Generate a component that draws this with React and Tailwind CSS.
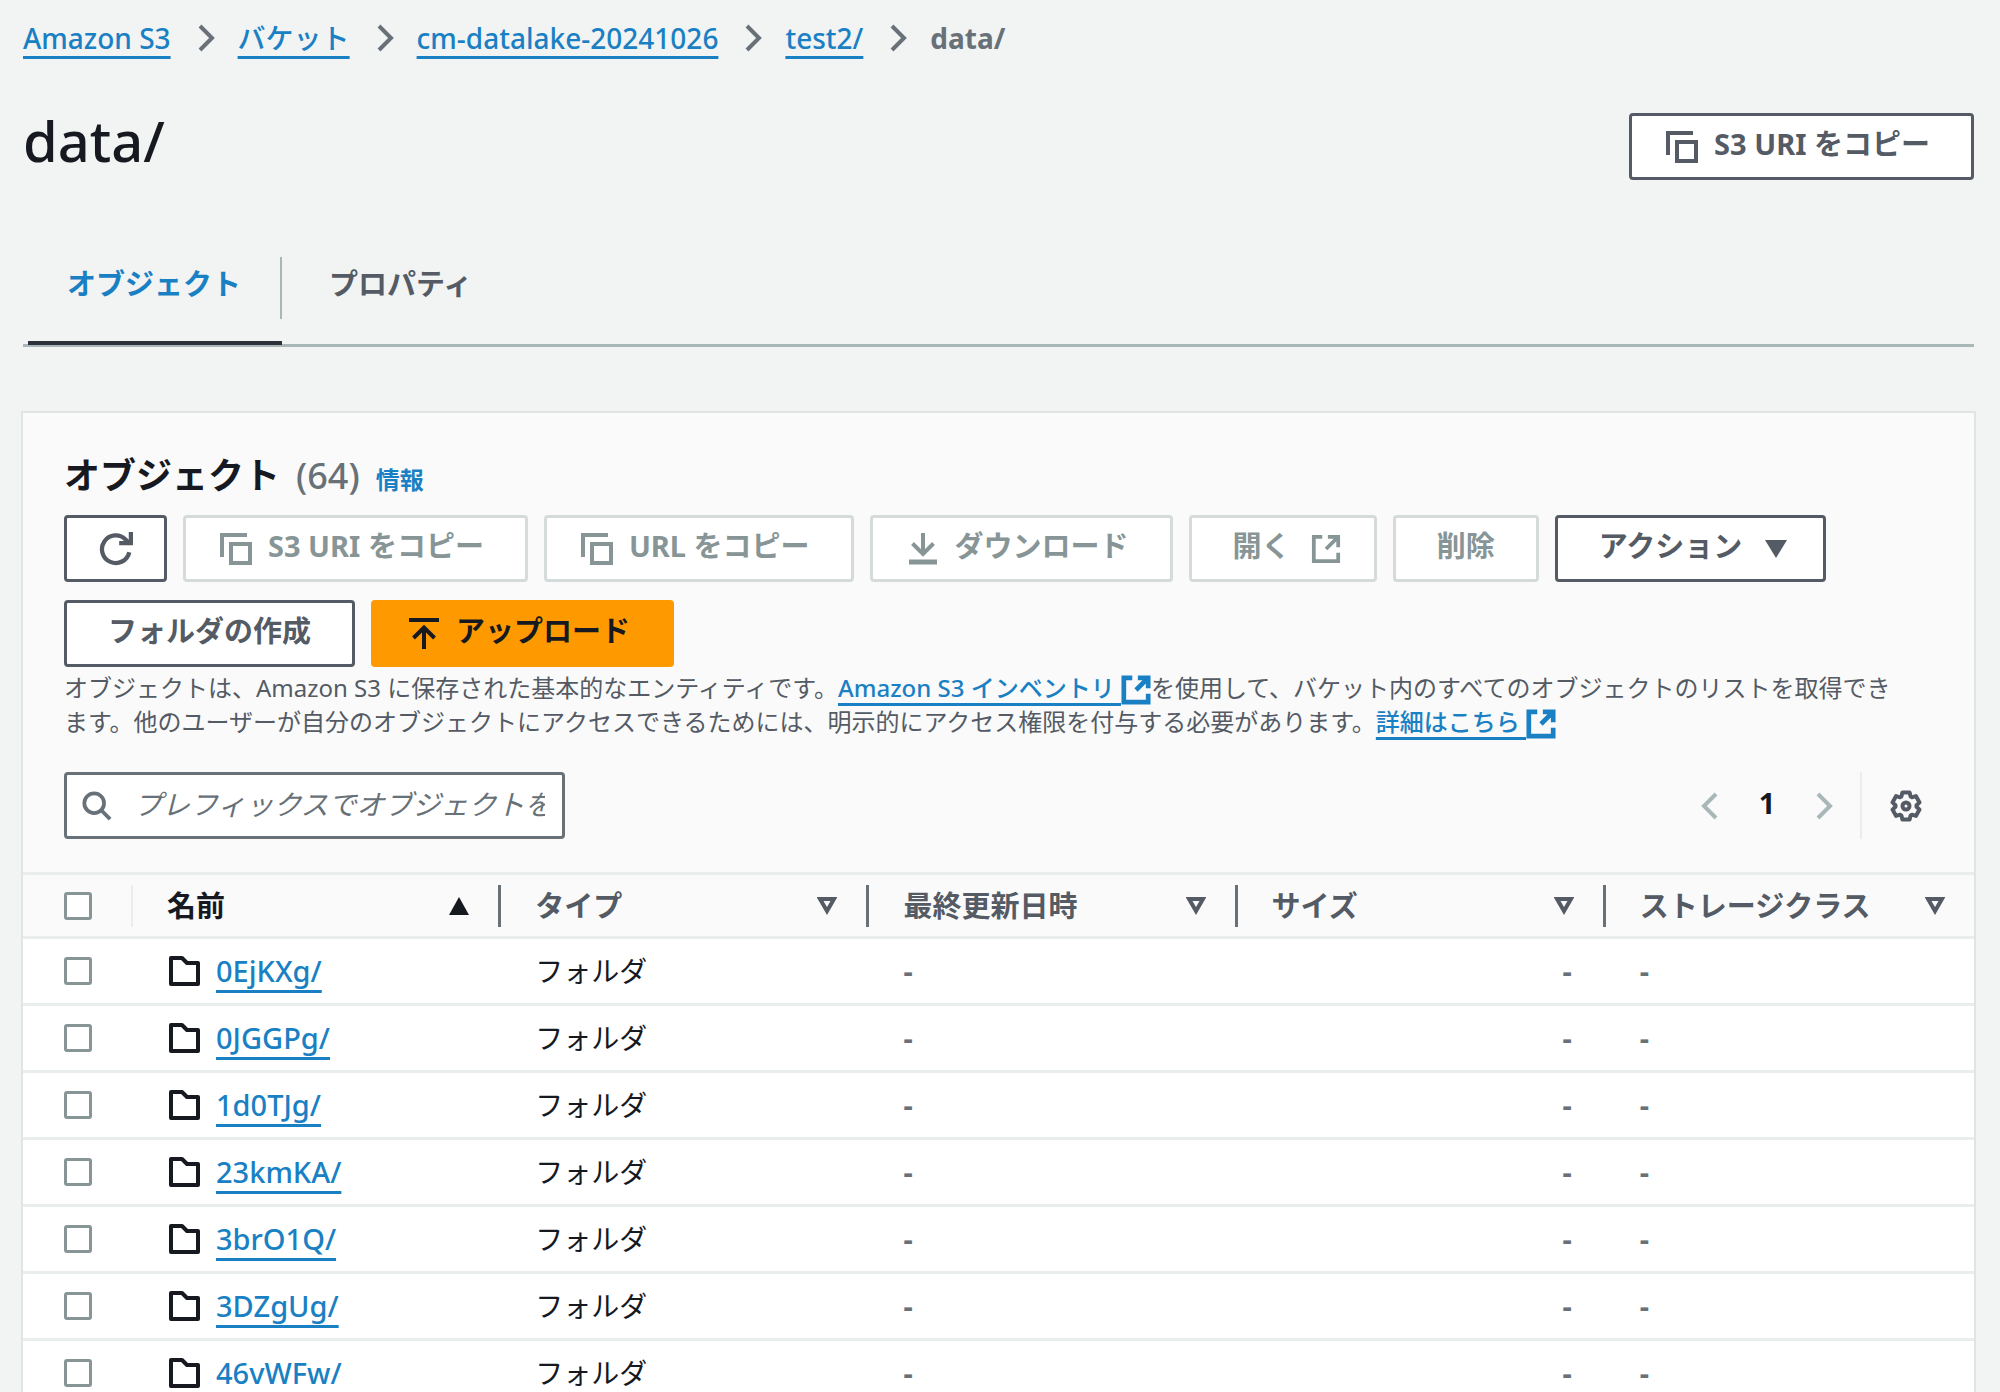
import React, { useState } from 'react';
import clsx from 'clsx';

const crumbs = ['Amazon S3', 'バケット', 'cm-datalake-20241026', 'test2/'];

const folders = ['0EjKXg/', '0JGGPg/', '1d0TJg/', '23kmKA/', '3brO1Q/', '3DZgUg/', '46vWFw/'];

const columns = ['名前', 'タイプ', '最終更新日時', 'サイズ', 'ストレージクラス'];

const linkClass = 'font-medium text-[#1a80c4] underline decoration-[3px] [text-decoration-skip-ink:none]';

const Icon = ({ size = 32, stroke = 4, className, children }) => (
  <svg
    width={size}
    height={size}
    viewBox="0 0 32 32"
    fill="none"
    stroke="currentColor"
    strokeWidth={stroke}
    aria-hidden="true"
    className={clsx('shrink-0', className)}
  >
    {children}
  </svg>
);

const CopyIcon = () => (
  <Icon>
    <path d="M2 24V2h25" />
    <path d="M11 11h19v19H11z" />
  </Icon>
);

const RefreshIcon = () => (
  <Icon size={34}>
    <path d="M28.500 19A13 13 0 1 1 25 7l4 4" />
    <path d="M30 0v10.500H19" />
  </Icon>
);

const DownloadIcon = () => (
  <Icon>
    <path d="M16 0v19M5.500 10.500L16 21l10.500-10.500" />
    <path d="M2 29h28" strokeWidth="5" />
  </Icon>
);

const UploadIcon = () => (
  <Icon>
    <path d="M16 31V11M5.500 20L16 9.500 26.500 20" />
    <path d="M1 2h30" />
  </Icon>
);

const ExternalIcon = ({ stroke = 4, size = 30, className }) => (
  <Icon size={size} stroke={stroke} className={className}>
    <path d="M12 3H3v26h26v-9" />
    <path d="M18 3h11v11M29 3L16 16" />
  </Icon>
);

const SearchIcon = () => (
  <Icon size={30}>
    <circle cx="13" cy="13" r="10.500" />
    <path d="M20.500 20.500L30 30" />
  </Icon>
);

const GearIcon = () => (
  <Icon>
    <path
      strokeLinejoin="round"
      d="M12.400 2.500h7.200l1 4.100 1.300.7 4-1.200 3.600 6.300-3 2.900v1.400l3 2.900-3.600 6.300-4-1.200-1.300.7-1 4.100h-7.200l-1-4.100-1.300-.7-4 1.200-3.600-6.300 3-2.900v-1.400l-3-2.900 3.600-6.300 4 1.200 1.300-.7z"
    />
    <circle cx="16" cy="16" r="3.500" />
  </Icon>
);

const FolderIcon = () => (
  <Icon>
    <path strokeLinejoin="round" d="M3 3h11l5 5h11v21H3z" />
  </Icon>
);

const Chevron = ({ left, className }) => (
  <svg
    width="18"
    height="28"
    viewBox="0 0 18 28"
    fill="none"
    stroke="currentColor"
    strokeWidth="4"
    aria-hidden="true"
    className={className}
  >
    <path d={left ? 'M16 2L4 14l12 12' : 'M2 2l12 12L2 26'} />
  </svg>
);

const SortIcon = ({ active }) => (
  <svg width="20" height="18" viewBox="0 0 20 18" aria-hidden="true" className="shrink-0">
    {active ? (
      <path d="M10 0l10 18H0z" fill="currentColor" />
    ) : (
      <path d="M3 2h14l-7 12z" fill="none" stroke="currentColor" strokeWidth="4" />
    )}
  </svg>
);

const Button = ({ icon, iconAfter, disabled, primary, label, children }) => (
  <button
    type="button"
    disabled={disabled}
    aria-label={label}
    className={clsx(
      'flex h-[67px] items-center rounded-[4px] border-[3px] font-bold whitespace-nowrap',
      label && 'w-[103px] justify-center',
      icon && !label && 'gap-4 pr-[41px] pl-[34px]',
      iconAfter && 'gap-[20px] pr-[33px] pl-[41px]',
      !icon && !iconAfter && 'px-[41px]',
      primary && 'border-[#ff9900] bg-[#ff9900] text-[#16191f]',
      disabled && 'border-[#d5dbdb] bg-white text-[#879596]',
      !primary && !disabled && 'border-[#545b64] bg-white text-[#545b64]'
    )}
  >
    {icon}
    {children && <span className="pb-[6px]">{children}</span>}
    {iconAfter}
  </button>
);

const Checkbox = ({ label }) => (
  <input
    type="checkbox"
    aria-label={label}
    className="block size-7 appearance-none rounded-[3px] border-[3px] border-[#879596] bg-white checked:bg-[#1a80c4]"
  />
);

const ObjectTable = () => (
  <table className="w-full table-fixed border-collapse">
    <thead className="bg-[#fafafa] text-[#545b64]">
      <tr className="h-[64px] border-y-[3px] border-[#eaeded]">
        <th className="w-[110px] p-0">
          <div className="flex h-[42px] items-center border-r-2 border-[#eaeded] pl-[41px]">
            <Checkbox label="すべて選択" />
          </div>
        </th>
        {columns.map((name, i) => (
          <th key={name} className={clsx('p-0 text-left font-bold', i === 0 && 'text-[#16191f]')}>
            <div
              className={clsx(
                'flex h-[42px] items-center justify-between pr-[29px] pl-[34px]',
                i < columns.length - 1 && 'border-r-[3px] border-[#687078]'
              )}
            >
              <span>{name}</span>
              <SortIcon active={i === 0} />
            </div>
          </th>
        ))}
      </tr>
    </thead>
    <tbody className="bg-white">
      {folders.map((name) => (
        <tr key={name} className="h-[67px] border-b-[3px] border-[#eaeded] text-[#16191f]">
          <td className="p-0 pl-[41px]">
            <Checkbox label={name} />
          </td>
          <td className="p-0 pl-[35px]">
            <div className="flex items-center gap-4">
              <FolderIcon />
              <a href="#" className={clsx(linkClass, 'underline-offset-[8px]')}>{name}</a>
            </div>
          </td>
          <td className="p-0 pl-[34px] text-[28px] font-normal">フォルダ</td>
          <td className="p-0 pl-[34px] font-bold text-[#687078]">-</td>
          <td className="p-0 pr-[34px] text-right font-bold text-[#687078]">-</td>
          <td className="p-0 pl-[34px] font-bold text-[#687078]">-</td>
        </tr>
      ))}
    </tbody>
  </table>
);

const App = () => {
  const [tab, setTab] = useState('オブジェクト');

  return (
    <div className="h-screen overflow-hidden bg-[#f2f3f3] pr-[26px] pl-[23px] font-['Noto_Sans','Noto_Sans_CJK_JP',sans-serif] text-[29px] leading-[40px] font-medium text-[#16191f]">
      <nav className="flex items-center pt-[18px] text-[28px]">
        {crumbs.map((crumb) => (
          <React.Fragment key={crumb}>
            <a href="#" className={clsx(linkClass, 'underline-offset-[7px]')}>{crumb}</a>
            <Chevron className="mr-[22px] ml-[27px] text-[#687078]" />
          </React.Fragment>
        ))}
        <span className="font-bold text-[#687078]">data/</span>
      </nav>

      <header className="flex items-start justify-between pt-[55px]">
        <h1 className="text-[56px] leading-[54px]">data/</h1>
        <Button icon={<CopyIcon />}>S3 URI をコピー</Button>
      </header>

      <div role="tablist" className="mt-[60px] flex gap-2 border-b-[3px] border-[#aab7b8] pl-[5px] font-bold">
        {['オブジェクト', 'プロパティ'].map((name) => (
          <button
            key={name}
            type="button"
            role="tab"
            aria-selected={tab === name}
            onClick={() => setTab(name)}
            className={clsx(
              '-mb-[1px] flex h-[105px] border-b-4 pt-[17px]',
              tab === name ? 'border-[#2b3138] text-[#1a80c4]' : 'border-transparent text-[#545b64]'
            )}
          >
            <span
              className={clsx(
                'h-[62px] px-[39px] pt-[7px]',
                name === 'オブジェクト' && 'border-r-2 border-[#aab7b8]'
              )}
            >
              {name}
            </span>
          </button>
        ))}
      </div>

      <main className="mt-[66px] bg-white shadow-[0_0_0_2px_#e0e4e4]">
        <section className="bg-[#fafafa] px-[41px] pt-[39px] pb-[33px]">
          <h2 className="flex items-baseline text-[36px] leading-[48px] font-bold">
            オブジェクト
            <span className="ml-4 font-medium text-[#687078]">(64)</span>
            <a href="#" className="ml-4 text-[24px] text-[#1a80c4]">情報</a>
          </h2>
          <div className="mt-[11px] flex flex-wrap gap-x-4 gap-y-[18px]">
            <Button label="更新" icon={<RefreshIcon />} />
            <Button disabled icon={<CopyIcon />}>S3 URI をコピー</Button>
            <Button disabled icon={<CopyIcon />}>URL をコピー</Button>
            <Button disabled icon={<DownloadIcon />}>ダウンロード</Button>
            <Button disabled iconAfter={<ExternalIcon />}>開く</Button>
            <Button disabled>削除</Button>
            <Button
              iconAfter={
                <svg width="28" height="18" viewBox="-3 0 28 18" aria-hidden="true">
                  <path d="M0 0h22L11 18z" fill="currentColor" />
                </svg>
              }
            >
              アクション
            </Button>
            <Button>フォルダの作成</Button>
            <Button primary icon={<UploadIcon />}>アップロード</Button>
          </div>
          <p className="mt-[4px] pr-8 text-[24px] leading-[33px] font-normal text-[#545b64]">
            オブジェクトは、Amazon S3 に保存された基本的なエンティティです。
            <a href="#" className={clsx(linkClass, 'underline-offset-[6px]')}>
              Amazon S3 インベントリ <ExternalIcon stroke={5} className="inline-block align-[-8px]" />
            </a>
            を使用して、バケット内のすべてのオブジェクトのリストを取得できます。他のユーザーが自分のオブジェクトにアクセスできるためには、明示的にアクセス権限を付与する必要があります。
            <a href="#" className={clsx(linkClass, 'underline-offset-[6px]')}>
              詳細はこちら <ExternalIcon stroke={5} className="inline-block align-[-8px]" />
            </a>
          </p>
          <div className="mt-[33px] flex items-center justify-between">
            <label className="flex h-[67px] w-[501px] items-center gap-[22px] rounded-[4px] border-[3px] border-[#687078] bg-white pr-[17px] pl-[15px] text-[28px] font-normal text-[#687078]">
              <SearchIcon />
              <input
                type="text"
                aria-label="検索"
                placeholder="プレフィックスでオブジェクトを検索"
                className="min-w-0 flex-1 pb-[4px] outline-none placeholder:text-[#687078] placeholder:italic"
              />
            </label>
            <div className="flex items-center pr-[11px]">
              <button type="button" aria-label="前のページ" disabled className="text-[#aab7b8]">
                <Chevron left />
              </button>
              <span className="w-[98px] pb-[6px] text-center font-bold">1</span>
              <button type="button" aria-label="次のページ" disabled className="text-[#aab7b8]">
                <Chevron />
              </button>
              <div className="ml-[26px] flex h-[67px] items-center border-l-2 border-[#eaeded] pl-[28px]">
                <button type="button" aria-label="設定" className="text-[#545b64]">
                  <GearIcon />
                </button>
              </div>
            </div>
          </div>
        </section>
        <ObjectTable />
      </main>
    </div>
  );
};

export default App;
